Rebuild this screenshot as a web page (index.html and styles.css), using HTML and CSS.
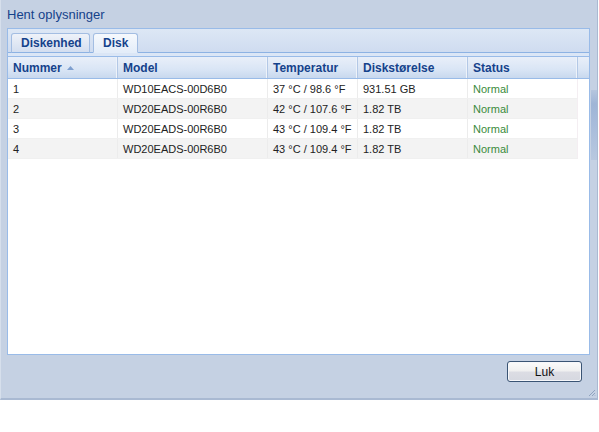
FILE: index.html
```html
<!DOCTYPE html>
<html>
<head>
<meta charset="utf-8">
<link rel="stylesheet" href="styles.css">
</head>
<body>
<div class="window">
  <div class="title">Hent oplysninger</div>
  <div class="panel">
    <div class="tabstrip">
      <div class="tab">Diskenhed</div>
      <div class="tab active">Disk</div>
    </div>
    <div class="tabband"></div>
    <div class="grid-head">
      <div class="hcell c1">Nummer <svg class="sort" width="7" height="4" viewBox="0 0 7 4"><path d="M0 4 L3.5 0 L7 4 Z" fill="#7e9fcf"/></svg></div>
      <div class="hcell c2">Model</div>
      <div class="hcell c3">Temperatur</div>
      <div class="hcell c4">Diskstørelse</div>
      <div class="hcell c5">Status</div>
      <div class="hcell c6"></div>
    </div>
    <div class="grid-body">
      <div class="row">
        <div class="cell c1">1</div>
        <div class="cell c2">WD10EACS-00D6B0</div>
        <div class="cell c3">37 °C / 98.6 °F</div>
        <div class="cell c4">931.51 GB</div>
        <div class="cell c5 ok">Normal</div>
      </div>
      <div class="row alt">
        <div class="cell c1">2</div>
        <div class="cell c2">WD20EADS-00R6B0</div>
        <div class="cell c3">42 °C / 107.6 °F</div>
        <div class="cell c4">1.82 TB</div>
        <div class="cell c5 ok">Normal</div>
      </div>
      <div class="row">
        <div class="cell c1">3</div>
        <div class="cell c2">WD20EADS-00R6B0</div>
        <div class="cell c3">43 °C / 109.4 °F</div>
        <div class="cell c4">1.82 TB</div>
        <div class="cell c5 ok">Normal</div>
      </div>
      <div class="row alt">
        <div class="cell c1">4</div>
        <div class="cell c2">WD20EADS-00R6B0</div>
        <div class="cell c3">43 °C / 109.4 °F</div>
        <div class="cell c4">1.82 TB</div>
        <div class="cell c5 ok">Normal</div>
      </div>
    </div>
  </div>
  <div class="footer">
    <button class="btn">Luk</button>
  </div>
  <div class="edge-strip"></div>
  <svg class="grip" width="8" height="8" viewBox="0 0 8 8">
    <path d="M7 1 L1 7 M7 4 L4 7 M7 6.5 L6.5 7" stroke="#8fa3c0" stroke-width="1" fill="none"/>
  </svg>
</div>
</body>
</html>
```

FILE: styles.css
```css
* { box-sizing: border-box; }
body {
  margin: 0;
  background: #ffffff;
  font-family: "Liberation Sans", Arial, sans-serif;
}
.window {
  position: relative;
  width: 598px;
  height: 400px;
  background: #c5d1e3;
  border-left: 1px solid #d6dfec;
  border-right: 1px solid #a9b9d2;
  border-bottom: 2px solid #a9b9d2;
  display: flex;
  flex-direction: column;
}
.title {
  height: 28px;
  padding: 7px 0 0 6px;
  font-size: 13px;
  color: #15428b;
  line-height: 15px;
}
.panel {
  margin: 0 7px 0 6px;
  height: 327px;
  border: 1px solid #99bbe8;
  background: #ffffff;
  display: flex;
  flex-direction: column;
}
.tabstrip {
  height: 24px;
  background: linear-gradient(#dde7f5, #cfdcf0);
  display: flex;
  align-items: flex-end;
  gap: 3px;
  padding-left: 3px;
  border-bottom: 1px solid #8db2e3;
}
.tab {
  height: 20px;
  margin-bottom: -1px;
  padding: 0 9px;
  font-size: 12px;
  font-weight: bold;
  color: #15428b;
  line-height: 19px;
  border: 1px solid #a3bde2;
  border-bottom: 1px solid #8db2e3;
  border-radius: 3px 3px 0 0;
  background: linear-gradient(#eef2f9, #d3def0);
}
.tab:first-child { width: 79px; }
.tab.active {
  width: 45px;
  border-bottom-color: #e4edf9;
  background: linear-gradient(#f6f9fd, #e4edf9);
}
.tabband {
  height: 4px;
  background: #dbe6f6;
  border-bottom: 1px solid #99bbe8;
}
.grid-head {
  display: flex;
  height: 22px;
  background: linear-gradient(#e9eff9 0%, #d9e5f5 60%, #c8d8ee 100%);
  border-bottom: 1px solid #99bbe8;
}
.hcell {
  height: 21px;
  padding-left: 5px;
  font-size: 12px;
  font-weight: bold;
  color: #15428b;
  line-height: 23px;
  border-right: 1px solid #b3c8e6;
  box-shadow: inset -1px 0 0 #eef3fa;
  white-space: nowrap;
}
.sort { margin-left: 2px; vertical-align: 2px; }
.c1 { width: 110px; }
.c2 { width: 150px; }
.c3 { width: 90px; }
.c4 { width: 110px; }
.c5 { width: 110px; }
.c6 { flex: 1; border-right: none; box-shadow: none; }
.grid-body {
  flex: 1;
  background: #ffffff;
}
.row {
  display: flex;
  width: 570px;
  height: 20px;
  border-bottom: 1px solid #f0f0f0;
}
.row.alt { background: #f3f3f3; }
.cell {
  height: 19px;
  padding: 1px 0 0 5px;
  font-size: 11px;
  color: #222;
  line-height: 19px;
  border-right: 1px solid #ececec;
  white-space: nowrap;
}
.cell.c5 { border-right: 1px solid #f4eef2; }
.ok { color: #3b8b3b; }
.footer {
  flex: 1;
  display: flex;
  justify-content: flex-end;
  align-items: flex-start;
  padding: 6px 15px 0 0;
}
.btn {
  width: 75px;
  height: 21px;
  padding: 0;
  font-family: "Liberation Sans", Arial, sans-serif;
  font-size: 12px;
  color: #111;
  border: 1px solid #3a5474;
  border-radius: 3px;
  background: linear-gradient(#fbfbfb 0%, #f0f0f0 48%, #dcdde4 52%, #d6d8e0 100%);
  box-shadow: inset 0 0 0 1px #f6f7fa;
}
.edge-strip {
  position: absolute;
  right: 0;
  top: 90px;
  width: 6px;
  height: 70px;
  background: linear-gradient(#b6c6de, #9fb5d6 20%, #a8bcdb 50%, #b8c8df);
}
.grip {
  position: absolute;
  right: 1px;
  bottom: 1px;
}
```
